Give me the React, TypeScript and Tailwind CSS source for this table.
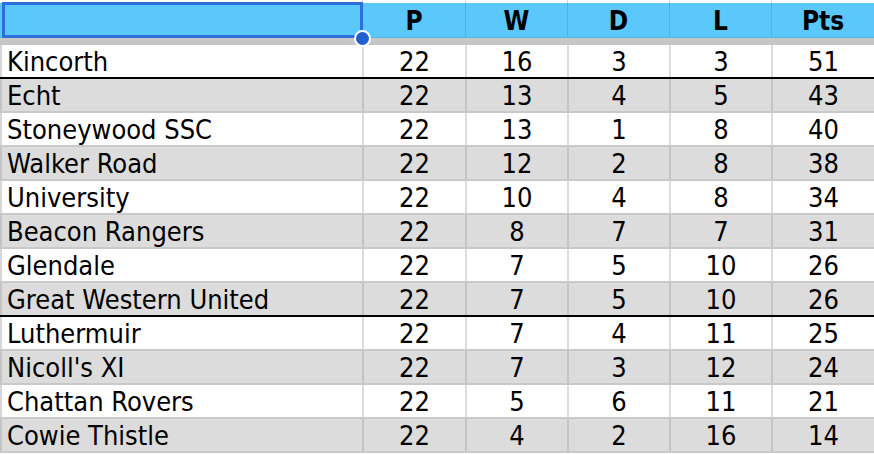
import React from 'react'

const rows: [string, number, number, number, number, number][] = [
  ['Kincorth', 22, 16, 3, 3, 51],
  ['Echt', 22, 13, 4, 5, 43],
  ['Stoneywood SSC', 22, 13, 1, 8, 40],
  ['Walker Road', 22, 12, 2, 8, 38],
  ['University', 22, 10, 4, 8, 34],
  ['Beacon Rangers', 22, 8, 7, 7, 31],
  ['Glendale', 22, 7, 5, 10, 26],
  ['Great Western United', 22, 7, 5, 10, 26],
  ['Luthermuir', 22, 7, 4, 11, 25],
  ["Nicoll's XI", 22, 7, 3, 12, 24],
  ['Chattan Rovers', 22, 5, 6, 11, 21],
  ['Cowie Thistle', 22, 4, 2, 16, 14],
]

const heads = ['P', 'W', 'D', 'L', 'Pts']

// rows after which a thick black rule is drawn
const ruleAfter = [0, 7]

export default function App() {
  return (
    <div
      className="w-[874px] h-[454px] overflow-hidden bg-white text-black"
      style={{ fontFamily: '"DejaVu Sans Condensed", "DejaVu Sans", sans-serif' }}
    >
      {/* top sliver of previous row */}
      <div className="grid grid-cols-[362px_103px_102px_102px_102px_103px] h-[3px]">
        <div />
        {heads.map(h => <div key={h} className="border-l border-[#d6d6d6]" />)}
      </div>

      {/* header */}
      <div className="relative grid grid-cols-[362px_103px_102px_102px_102px_103px] h-[34px] bg-[#5ac8fa]">
        <div className="absolute left-[2px] top-[-1px] w-[361px] h-[36px] border-[3px] border-[#2f6fdc]" />
        <div className="absolute left-[354px] top-[27px] w-[17px] h-[17px] rounded-full bg-[#1f5fcf] border-2 border-white z-10" />
        <div />
        {heads.map(h => (
          <div key={h} className="border-l border-[#4fb3e0] flex items-center justify-center text-[26px] leading-none font-bold pt-[2px]">
            {h}
          </div>
        ))}
      </div>

      {/* separator band */}
      <div className="h-[8px] bg-[#c6c6c6] border-t border-[#55b6e6]" />

      {rows.map((r, i) => {
        const gray = i % 2 === 1
        const rule = ruleAfter.includes(i)
        return (
          <div
            key={r[0]}
            className={`grid grid-cols-[362px_103px_102px_102px_102px_103px] h-[34px] text-[27px] leading-none border-b-2 ${
              rule ? 'border-black' : 'border-[#c9c9c9]'
            } ${gray ? 'bg-[#dcdcdc]' : 'bg-white'}`}
          >
            <div className={`flex items-center pl-[5px] pt-[1px] border-l-2 ${gray ? 'border-[#c4c4c4]' : 'border-[#d6d6d6]'}`}>
              {r[0]}
            </div>
            {r.slice(1).map((v, j) => (
              <div
                key={j}
                className={`flex items-center justify-center pt-[1px] border-l-2 ${gray ? 'border-[#c4c4c4]' : 'border-[#dcdcdc]'}`}
              >
                {v}
              </div>
            ))}
          </div>
        )
      })}
    </div>
  )
}
